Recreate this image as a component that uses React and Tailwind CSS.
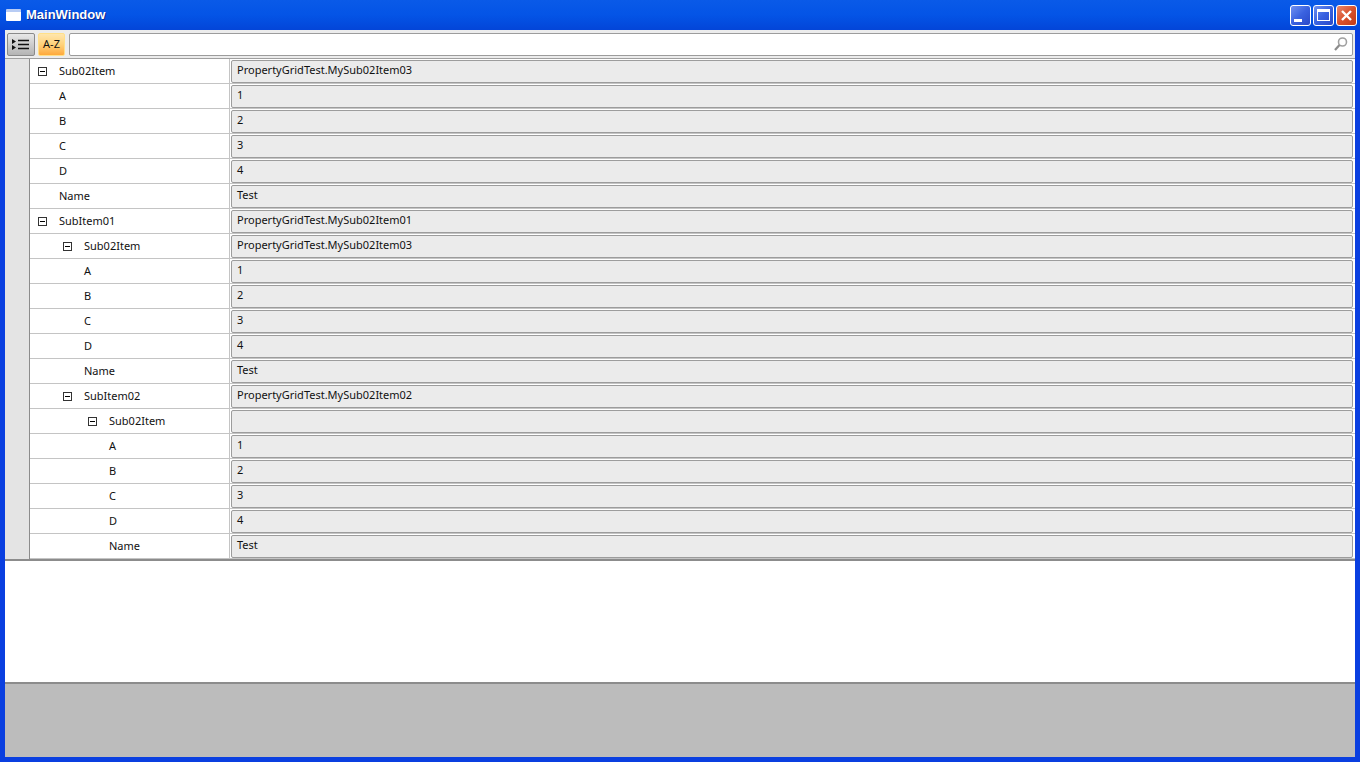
const rows = [
  { name: "Sub02Item", value: "PropertyGridTest.MySub02Item03", depth: 0, open: true },
  { name: "A", value: "1", depth: 0 },
  { name: "B", value: "2", depth: 0 },
  { name: "C", value: "3", depth: 0 },
  { name: "D", value: "4", depth: 0 },
  { name: "Name", value: "Test", depth: 0 },
  { name: "SubItem01", value: "PropertyGridTest.MySub02Item01", depth: 0, open: true },
  { name: "Sub02Item", value: "PropertyGridTest.MySub02Item03", depth: 1, open: true },
  { name: "A", value: "1", depth: 1 },
  { name: "B", value: "2", depth: 1 },
  { name: "C", value: "3", depth: 1 },
  { name: "D", value: "4", depth: 1 },
  { name: "Name", value: "Test", depth: 1 },
  { name: "SubItem02", value: "PropertyGridTest.MySub02Item02", depth: 1, open: true },
  { name: "Sub02Item", value: "", depth: 2, open: true },
  { name: "A", value: "1", depth: 2 },
  { name: "B", value: "2", depth: 2 },
  { name: "C", value: "3", depth: 2 },
  { name: "D", value: "4", depth: 2 },
  { name: "Name", value: "Test", depth: 2 },
];

const indents = ["w-0", "w-[25px]", "w-[50px]"];

function Expander() {
  return (
    <div className="w-[9px] h-[9px] border border-[#333] bg-white flex items-center justify-center">
      <div className="w-[5px] h-px bg-black" />
    </div>
  );
}

function Row({ row }) {
  return (
    <div className="flex h-[25px] border-b border-[#c4c4c4]">
      <div className="w-[200px] flex items-center border-r border-[#c4c4c4]">
        <div className={indents[row.depth]} />
        <div className="w-[29px] pl-[8px] flex items-center">{row.open && <Expander />}</div>
        <span>{row.name}</span>
      </div>
      <div className="flex-1 pl-px pr-px">
        <div className="h-[23px] mt-px mr-[1px] border border-[#9c9c9c] rounded-[2px] bg-[#ebebeb] pl-[5px] leading-[18px]">
          {row.value}
        </div>
      </div>
    </div>
  );
}

function WinButton({ red, children }) {
  return (
    <div
      className={
        "w-[21px] h-[21px] border border-white rounded-[3px] flex items-center justify-center " +
        (red
          ? "bg-gradient-to-br from-[#e8866a] via-[#d9512c] to-[#c23a17]"
          : "bg-gradient-to-br from-[#6f8ff0] via-[#3a62e0] to-[#2a48c8]")
      }
    >
      {children}
    </div>
  );
}

export default function App() {
  return (
    <div
      className="w-[1360px] h-[762px] flex flex-col overflow-hidden bg-[#0a3fe0] text-[11px] text-[#111]"
      style={{ fontFamily: '"Noto Sans", sans-serif' }}
    >
      {/* title bar */}
      <div className="h-[30px] shrink-0 flex items-center pl-[6px] pr-[3px] bg-gradient-to-b from-[#0a5ae8] via-[#0454e6] to-[#0345d8]">
        <div className="w-[15px] h-[12px] bg-white border-t-[3px] border-[#b8ccf4] rounded-[1px] mr-[5px]" />
        <span
          className="text-white font-bold text-[13px] [text-shadow:1px_1px_0_#0a2a90]"
          style={{ fontFamily: '"Liberation Sans", sans-serif' }}
        >
          MainWindow
        </span>
        <div className="ml-auto flex gap-[2px]">
          <WinButton>
            <div className="w-[8px] h-[3px] bg-white mt-[10px] mr-[5px]" />
          </WinButton>
          <WinButton>
            <div className="w-[13px] h-[12px] border border-white border-t-[3px]" />
          </WinButton>
          <WinButton red>
            <svg width="13" height="13" viewBox="0 0 13 13">
              <path d="M2 2 L11 11 M11 2 L2 11" stroke="white" strokeWidth="2.4" />
            </svg>
          </WinButton>
        </div>
      </div>

      {/* client area */}
      <div className="flex-1 mx-[5px] mb-[5px] flex flex-col bg-white">
        {/* toolbar */}
        <div className="h-[29px] shrink-0 flex items-center pl-[2px] pr-[2px] gap-[3px] bg-[#ececec] border-b border-[#a0a0a0]">
          <div className="w-[28px] h-[23px] border border-[#8a8a8a] rounded-[2px] bg-gradient-to-b from-[#e8e8e8] to-[#b4b4b4] flex items-center justify-center">
            <svg width="20" height="13" viewBox="0 0 20 13">
              <path d="M1 1 L5 3.5 L1 6 Z M1 7 L5 9.5 L1 12 Z" fill="#111" />
              <path d="M7 2.5 H18 M7 6.5 H18 M7 10.5 H18" stroke="#111" strokeWidth="1.4" />
            </svg>
          </div>
          <div className="w-[27px] h-[23px] border border-[#ffe08a] rounded-[2px] bg-gradient-to-b from-[#ffe6ad] via-[#ffd27a] to-[#ffa93a] flex items-center justify-center">
            A-Z
          </div>
          <div className="flex-1 h-[23px] ml-px border border-[#9c9c9c] rounded-[2px] bg-white flex items-center justify-end pr-[3px]">
            <svg width="16" height="16" viewBox="0 0 16 16" fill="none">
              <circle cx="9.5" cy="6" r="4" stroke="#a0a0a0" strokeWidth="1.6" />
              <path d="M6.5 9 L2 14" stroke="#8c8c8c" strokeWidth="2.2" />
            </svg>
          </div>
        </div>

        {/* property grid */}
        <div className="flex border-b-2 border-[#8c8c8c]">
          <div className="w-[25px] shrink-0 bg-[#e4e4e4] border-r border-[#8c8c8c]" />
          <div className="flex-1">
            {rows.map((row, i) => (
              <Row key={i} row={row} />
            ))}
          </div>
        </div>

        <div className="flex-1 bg-white" />
        <div className="h-[75px] shrink-0 bg-[#bcbcbc] border-t-2 border-[#8c8c8c]" />
      </div>
    </div>
  );
}
